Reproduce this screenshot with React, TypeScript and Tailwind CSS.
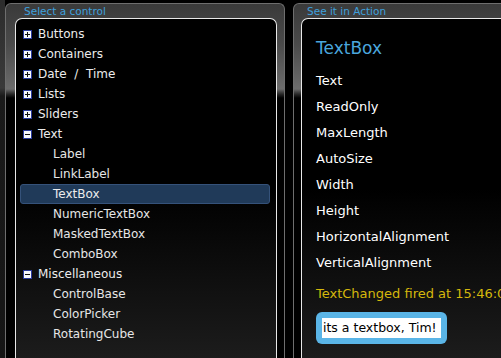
const tree: { label: string; kind: "plus" | "minus" | "child"; selected?: boolean }[] = [
  { label: "Buttons", kind: "plus" },
  { label: "Containers", kind: "plus" },
  { label: "Date  /  Time", kind: "plus" },
  { label: "Lists", kind: "plus" },
  { label: "Sliders", kind: "plus" },
  { label: "Text", kind: "minus" },
  { label: "Label", kind: "child" },
  { label: "LinkLabel", kind: "child" },
  { label: "TextBox", kind: "child", selected: true },
  { label: "NumericTextBox", kind: "child" },
  { label: "MaskedTextBox", kind: "child" },
  { label: "ComboBox", kind: "child" },
  { label: "Miscellaneous", kind: "minus" },
  { label: "ControlBase", kind: "child" },
  { label: "ColorPicker", kind: "child" },
  { label: "RotatingCube", kind: "child" },
];

const props = [
  "Text",
  "ReadOnly",
  "MaxLength",
  "AutoSize",
  "Width",
  "Height",
  "HorizontalAlignment",
  "VerticalAlignment",
];

function Toggle({ open }: { open: boolean }) {
  return (
    <svg width="9" height="9" viewBox="0 0 9 9" className="shrink-0">
      <rect x="0.5" y="0.5" width="8" height="8" fill="#f6f8fc" stroke="#2a3a9c" />
      <path d="M2 4.5h5" stroke="#111" strokeWidth="1" />
      {!open && <path d="M4.5 2v5" stroke="#111" strokeWidth="1" />}
    </svg>
  );
}

export default function App() {
  return (
    <div className="flex h-[358px] w-[501px] overflow-hidden bg-black font-['DejaVu_Sans',sans-serif]">
      <div className="w-[5px] shrink-0 bg-[linear-gradient(to_bottom,#2c2c2c_0px,#3a3a3a_88px,#1a1a1a_96px,#151515_100%)]" />

      {/* left panel: control tree */}
      <section className="mt-[3px] flex w-[280px] shrink-0 flex-col rounded-t-[6px] border border-b-0 border-[#6e6e6e] bg-[linear-gradient(to_bottom,#3a3a3a_0px,#4a4a4a_40px,#6c6c6c_85px,#2a2a2a_90px,#000_94px)] pl-[9px] pr-[7px]">
        <div className="h-[14px] pl-[9px] text-[10.5px] leading-[14px] text-[#3fa0dc]">Select a control</div>
        <div className="flex-1 rounded-t-[7px] border border-b-0 border-[#e8e8e8] bg-[linear-gradient(to_bottom,#000_0px,#000_170px,#1c1c1c_340px)] px-[4px] pt-[5px]">
          {tree.map((t) => (
            <div
              key={t.label}
              className={
                t.selected
                  ? "mr-[2px] flex h-[20px] items-center whitespace-pre rounded-[3px] border border-[#35527a] bg-[#203a59] pl-[32px] text-[12px] text-[#ececec]"
                  : t.kind === "child"
                    ? "flex h-[20px] items-center whitespace-pre pl-[33px] text-[12px] text-[#e6e6e6]"
                    : "flex h-[20px] items-center gap-[6px] whitespace-pre pl-[3px] text-[12px] text-[#ececec]"
              }
            >
              {t.kind !== "child" && <Toggle open={t.kind === "minus"} />}
              <span>{t.label}</span>
            </div>
          ))}
        </div>
      </section>

      {/* right panel: demo */}
      <section className="ml-[8px] mt-[3px] flex w-[240px] shrink-0 flex-col rounded-t-[6px] border border-b-0 border-[#6e6e6e] bg-[linear-gradient(to_bottom,#3a3a3a_0px,#4a4a4a_40px,#6c6c6c_85px,#2a2a2a_90px,#000_94px)] pl-[7px]">
        <div className="h-[14px] pl-[6px] text-[10.5px] leading-[14px] text-[#3fa0dc]">See it in Action</div>
        <div className="flex-1 rounded-tl-[7px] border border-b-0 border-r-0 border-[#e8e8e8] bg-[linear-gradient(to_bottom,#000_0px,#000_170px,#1c1c1c_340px)] pl-[14px] pt-[18px]">
          <h1 className="h-[22px] text-[17px] leading-[22px] text-[#4aa6dd]">TextBox</h1>
          <ul className="mt-[9px]">
            {props.map((p) => (
              <li key={p} className="flex h-[26px] items-center text-[13px] text-white">
                {p}
              </li>
            ))}
          </ul>
          <p className="mt-[8px] h-[20px] whitespace-nowrap text-[13px] leading-[20px] text-[#d5b80c]">
            TextChanged fired at 15:46:0
          </p>
          <div className="mt-[8px] w-[131px] rounded-[6px] bg-[#5ab5e7] p-[6px]">
            <div className="flex h-[20px] items-center whitespace-nowrap bg-white pl-[1px] text-[12.5px] text-black">
              its a textbox, Tim!
            </div>
          </div>
        </div>
      </section>
    </div>
  );
}
